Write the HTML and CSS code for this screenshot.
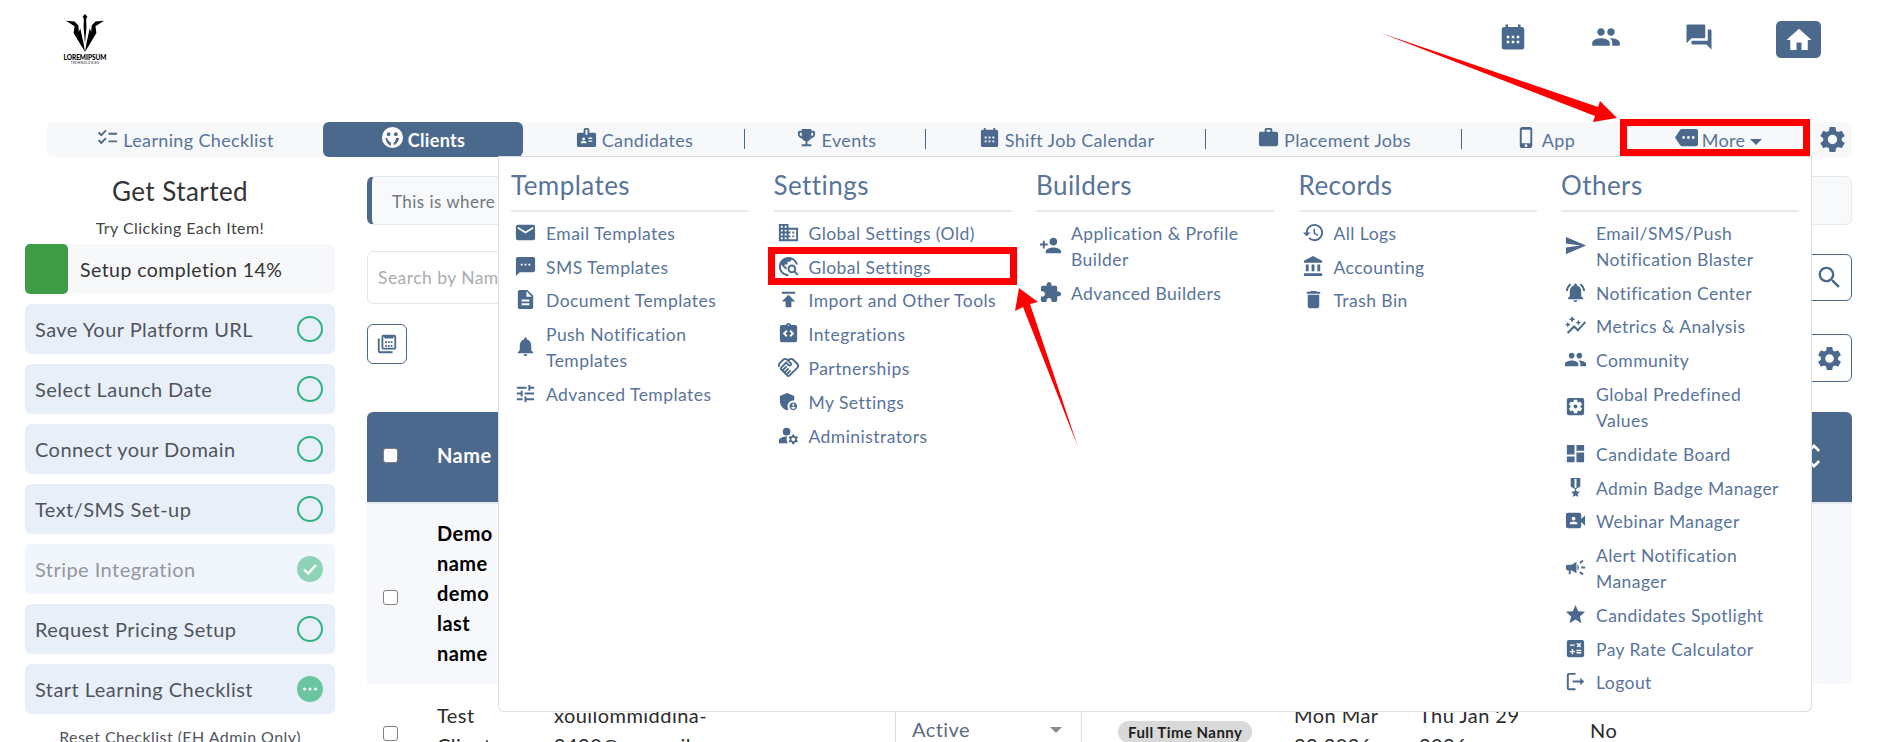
FILE: index.html
```html
<!DOCTYPE html>
<html lang="en">
<head>
<meta charset="utf-8">
<title>Clients</title>
<link rel="stylesheet" href="styles.css">
</head>
<body>
<svg class="defs" aria-hidden="true">
  <symbol id="i-checklist" viewBox="0 0 24 24"><path d="M22 7h-9v2h9V7zm0 8h-9v2h9v-2zM5.54 11 2 7.46l1.41-1.41 2.12 2.12 4.24-4.24 1.41 1.41L5.54 11zm0 8L2 15.46l1.41-1.41 2.12 2.12 4.24-4.24 1.41 1.41L5.54 19z"/></symbol>
  <symbol id="i-badge" viewBox="0 0 24 24"><path d="M20 7h-5V4c0-1.1-.9-2-2-2h-2c-1.1 0-2 .9-2 2v3H4c-1.1 0-2 .9-2 2v11c0 1.1.9 2 2 2h16c1.1 0 2-.9 2-2V9c0-1.1-.9-2-2-2zM9 12c.83 0 1.5.67 1.5 1.5S9.83 15 9 15s-1.5-.67-1.5-1.5S8.17 12 9 12zm3 6H6v-.75c0-1 2-1.5 3-1.5s3 .5 3 1.5V18zm1-9h-2V4h2v5zm5 7.5h-4V15h4v1.5zm0-3h-4V12h4v1.5z"/></symbol>
  <symbol id="i-trophy" viewBox="0 0 24 24"><path d="M19 5h-2V3H7v2H5c-1.1 0-2 .9-2 2v1c0 2.55 1.92 4.63 4.39 4.94.63 1.5 1.98 2.63 3.61 2.96V19H7v2h10v-2h-4v-3.1c1.63-.33 2.98-1.46 3.61-2.96C19.08 12.63 21 10.55 21 8V7c0-1.1-.9-2-2-2zM5 8V7h2v3.82C5.84 10.4 5 9.3 5 8zm14 0c0 1.3-.84 2.4-2 2.82V7h2v1z"/></symbol>
  <symbol id="i-calendar" viewBox="0 0 24 24"><path fill-rule="evenodd" d="M19 4h-1V2h-2v2H8V2H6v2H5a2 2 0 0 0-2 2v14a2 2 0 0 0 2 2h14a2 2 0 0 0 2-2V6a2 2 0 0 0-2-2zM7 11h2v2H7zm4 0h2v2h-2zm4 0h2v2h-2zm-8 4h2v2H7zm4 0h2v2h-2zm4 0h2v2h-2z"/></symbol>
  <symbol id="i-work" viewBox="0 0 24 24"><path d="M20 6h-4V4c0-1.11-.89-2-2-2h-4c-1.11 0-2 .89-2 2v2H4c-1.11 0-1.99.89-1.99 2L2 19c0 1.11.89 2 2 2h16c1.11 0 2-.89 2-2V8c0-1.11-.89-2-2-2zm-6 0h-4V4h4v2z"/></symbol>
  <symbol id="i-phone" viewBox="0 0 24 24"><path d="M15.5 1h-8C6.12 1 5 2.12 5 3.5v17C5 21.88 6.12 23 7.5 23h8c1.38 0 2.5-1.12 2.5-2.5v-17C18 2.12 16.88 1 15.5 1zm-4 21c-.83 0-1.5-.67-1.5-1.5s.67-1.5 1.5-1.5 1.5.67 1.5 1.5-.67 1.5-1.5 1.5zm4.5-4H7V4h9v14z"/></symbol>
  <symbol id="i-more" viewBox="0 0 24 24"><path d="M22 3H7c-.69 0-1.23.35-1.59.88L0 12l5.41 8.11c.36.53.9.89 1.59.89h15c1.1 0 2-.9 2-2V5c0-1.1-.9-2-2-2zM9 13.5c-.83 0-1.5-.67-1.5-1.5s.67-1.5 1.5-1.5 1.5.67 1.5 1.5-.67 1.5-1.5 1.5zm5 0c-.83 0-1.5-.67-1.5-1.5s.67-1.5 1.5-1.5 1.5.67 1.5 1.5-.67 1.5-1.5 1.5zm5 0c-.83 0-1.5-.67-1.5-1.5s.67-1.5 1.5-1.5 1.5.67 1.5 1.5-.67 1.5-1.5 1.5z"/></symbol>
  <symbol id="i-gear" viewBox="0 0 24 24"><path d="M19.14 12.94c.04-.3.06-.61.06-.94 0-.32-.02-.64-.07-.94l2.03-1.58c.18-.14.23-.41.12-.61l-1.92-3.32c-.12-.22-.37-.29-.59-.22l-2.39.96c-.5-.38-1.03-.7-1.62-.94l-.36-2.54c-.04-.24-.24-.41-.48-.41h-3.84c-.24 0-.43.17-.47.41l-.36 2.54c-.59.24-1.13.57-1.62.94l-2.39-.96c-.22-.08-.47 0-.59.22L2.74 8.87c-.12.21-.08.47.12.61l2.03 1.58c-.05.3-.09.63-.09.94s.02.64.07.94l-2.03 1.58c-.18.14-.23.41-.12.61l1.92 3.32c.12.22.37.29.59.22l2.39-.96c.5.38 1.03.7 1.62.94l.36 2.54c.05.24.24.41.48.41h3.84c.24 0 .44-.17.47-.41l.36-2.54c.59-.24 1.13-.56 1.62-.94l2.39.96c.22.08.47 0 .59-.22l1.92-3.32c.12-.22.07-.47-.12-.61l-2.01-1.58zM12 15.6c-1.98 0-3.6-1.62-3.6-3.6s1.62-3.6 3.6-3.6 3.6 1.62 3.6 3.6-1.62 3.6-3.6 3.6z"/></symbol>
  <symbol id="i-people" viewBox="0 0 24 24"><path d="M16 11c1.66 0 2.99-1.34 2.99-3S17.66 5 16 5c-1.66 0-3 1.34-3 3s1.34 3 3 3zm-8 0c1.66 0 2.99-1.34 2.99-3S9.66 5 8 5C6.34 5 5 6.34 5 8s1.34 3 3 3zm0 2c-2.33 0-7 1.17-7 3.5V19h14v-2.5c0-2.33-4.67-3.5-7-3.5zm8 0c-.29 0-.62.02-.97.05 1.16.84 1.97 1.97 1.97 3.45V19h6v-2.5c0-2.33-4.67-3.5-7-3.5z"/></symbol>
  <symbol id="i-forum" viewBox="0 0 24 24"><path d="M21 6h-2v9H6v2c0 .55.45 1 1 1h11l4 4V7c0-.55-.45-1-1-1zm-4 6V3c0-.55-.45-1-1-1H3c-.55 0-1 .45-1 1v14l4-4h10c.55 0 1-.45 1-1z"/></symbol>
  <symbol id="i-home" viewBox="0 0 24 24"><path d="M10 20v-6h4v6h5v-8h3L12 3 2 12h3v8z"/></symbol>
  <symbol id="i-email" viewBox="0 0 24 24"><path d="M20 4H4c-1.1 0-1.99.9-1.99 2L2 18c0 1.1.9 2 2 2h16c1.1 0 2-.9 2-2V6c0-1.1-.9-2-2-2zm0 4l-8 5-8-5V6l8 5 8-5v2z"/></symbol>
  <symbol id="i-sms" viewBox="0 0 24 24"><path d="M20 2H4c-1.1 0-1.99.9-1.99 2L2 22l4-4h14c1.1 0 2-.9 2-2V4c0-1.1-.9-2-2-2zM9 11H7V9h2v2zm4 0h-2V9h2v2zm4 0h-2V9h2v2z"/></symbol>
  <symbol id="i-doc" viewBox="0 0 24 24"><path d="M14 2H6c-1.1 0-1.99.9-1.99 2L4 20c0 1.1.89 2 1.99 2H18c1.1 0 2-.9 2-2V8l-6-6zm2 16H8v-2h8v2zm0-4H8v-2h8v2zm-3-5V3.5L18.5 9H13z"/></symbol>
  <symbol id="i-bell" viewBox="0 0 24 24"><path d="M12 22c1.1 0 2-.9 2-2h-4c0 1.1.9 2 2 2zm6-6v-5c0-3.07-1.63-5.64-4.5-6.32V4c0-.83-.67-1.5-1.5-1.5s-1.5.67-1.5 1.5v.68C7.64 5.36 6 7.92 6 11v5l-2 2v1h16v-1l-2-2z"/></symbol>
  <symbol id="i-tune" viewBox="0 0 24 24"><path d="M3 17v2h6v-2H3zM3 5v2h10V5H3zm10 16v-2h8v-2h-8v-2h-2v6h2zM7 9v2H3v2h4v2h2V9H7zm14 4v-2H11v2h10zm-6-4h2V7h4V5h-4V3h-2v6z"/></symbol>
  <symbol id="i-domain" viewBox="0 0 24 24"><path d="M12 7V3H2v18h20V7H12zM6 19H4v-2h2v2zm0-4H4v-2h2v2zm0-4H4V9h2v2zm0-4H4V5h2v2zm4 12H8v-2h2v2zm0-4H8v-2h2v2zm0-4H8V9h2v2zm0-4H8V5h2v2zm10 12h-8v-2h2v-2h-2v-2h2v-2h-2V9h8v10zm-2-8h-2v2h2v-2zm0 4h-2v2h2v-2z"/></symbol>
  <symbol id="i-travel" viewBox="0 0 24 24"><path d="M19.3 16.9c.4-.7.7-1.5.7-2.4 0-2.5-2-4.5-4.5-4.5S11 12 11 14.5s2 4.5 4.5 4.5c.9 0 1.7-.3 2.4-.7l3.2 3.2 1.4-1.4-3.2-3.2zm-3.8.1c-1.4 0-2.5-1.1-2.5-2.5s1.1-2.5 2.5-2.5 2.5 1.1 2.5 2.5-1.1 2.5-2.5 2.5zM12 20v2C6.48 22 2 17.52 2 12S6.48 2 12 2c4.84 0 8.87 3.44 9.8 8h-2.07c-.64-2.46-2.4-4.47-4.73-5.41V5c0 1.1-.9 2-2 2h-2v2c0 .55-.45 1-1 1H8v2h2v3H9l-4.79-4.79C4.08 10.79 4 11.38 4 12c0 4.41 3.59 8 8 8z"/></symbol>
  <symbol id="i-publish" viewBox="0 0 24 24"><path d="M5 4v2h14V4H5zm0 10h4v6h6v-6h4l-7-7-7 7z"/></symbol>
  <symbol id="i-code" viewBox="0 0 24 24"><path d="M19 3h-4.18C14.4 1.84 13.3 1 12 1s-2.4.84-2.82 2H5a2 2 0 0 0-2 2v14a2 2 0 0 0 2 2h14a2 2 0 0 0 2-2V5a2 2 0 0 0-2-2zM11 14.17l-1.41 1.42L6 12l3.59-3.59L11 9.83 8.83 12 11 14.17zm1-9.92c-.41 0-.75-.34-.75-.75s.34-.75.75-.75.75.34.75.75-.34.75-.75.75zm2.41 11.34L13 14.17 15.17 12 13 9.83l1.41-1.42L18 12l-3.59 3.59z"/></symbol>
  <symbol id="i-hand" viewBox="0 0 24 24"><path d="M12.22 19.85c-.18.18-.5.21-.71 0-.18-.18-.21-.5 0-.71l3.39-3.39-1.41-1.41-3.39 3.39c-.19.2-.51.19-.71 0-.21-.21-.18-.53 0-.71l3.39-3.39-1.41-1.41-3.39 3.39c-.18.18-.5.21-.71 0-.19-.19-.19-.51 0-.71l3.39-3.39-1.42-1.41-3.39 3.39c-.18.18-.5.21-.71 0-.19-.2-.19-.51 0-.71L9.52 8.4l1.87 1.86c.95.95 2.59.94 3.54 0 .98-.98.98-2.56 0-3.54l-1.86-1.86.28-.28c.78-.78 2.05-.78 2.83 0l4.24 4.24c.78.78.78 2.05 0 2.83l-8.2 8.2zm9.61-6.78c1.56-1.56 1.56-4.09 0-5.66l-4.24-4.24c-1.56-1.56-4.09-1.56-5.66 0l-.28.28-.28-.28c-1.56-1.56-4.09-1.56-5.66 0L2.17 6.71c-1.42 1.42-1.55 3.63-.4 5.19l1.45-1.45c-.39-.75-.26-1.7.37-2.33l3.54-3.54c.78-.78 2.05-.78 2.83 0l3.56 3.56c.18.18.21.5 0 .71-.21.21-.53.18-.71 0L9.52 5.57l-5.8 5.79c-.98.97-.98 2.56 0 3.54.39.39.89.63 1.42.7.07.52.3 1.02.7 1.42.4.4.9.63 1.42.7.07.52.3 1.02.7 1.42.4.4.9.63 1.42.7.07.54.31 1.03.7 1.42.47.47 1.1.73 1.77.73.67 0 1.3-.26 1.77-.73l8.21-8.19z"/></symbol>
  <symbol id="i-shield" viewBox="0 0 24 24"><path d="M17 11c.34 0 .67.04 1 .09V6.27L10.5 3 3 6.27v4.91c0 4.54 3.2 8.79 7.5 9.82.55-.13 1.08-.32 1.6-.55-.69-.98-1.1-2.17-1.1-3.45 0-3.31 2.69-6 6-6z"/><path d="M17 13c-2.21 0-4 1.79-4 4s1.79 4 4 4 4-1.79 4-4-1.79-4-4-4zm0 1.38c.62 0 1.12.51 1.12 1.12s-.51 1.12-1.12 1.12-1.12-.51-1.12-1.12.5-1.12 1.12-1.12zm0 5.37c-.93 0-1.74-.46-2.24-1.17.05-.72 1.51-1.08 2.24-1.08s2.19.36 2.24 1.08c-.5.71-1.31 1.17-2.24 1.17z"/></symbol>
  <symbol id="i-admin" viewBox="0 0 24 24"><circle cx="10" cy="8" r="4"/><path d="M10.67 13.02c-.22-.01-.44-.02-.67-.02-2.42 0-4.68.67-6.61 1.82-.88.52-1.39 1.5-1.39 2.53V20h9.26c-.79-1.13-1.26-2.51-1.26-4 0-1.07.25-2.07.67-2.98z"/><path d="M20.75 16c0-.22-.03-.42-.06-.63l1.14-1.01-1-1.73-1.45.49c-.32-.27-.68-.48-1.08-.63L18 11h-2l-.3 1.49c-.4.15-.76.36-1.08.63l-1.45-.49-1 1.73 1.14 1.01c-.03.21-.06.41-.06.63s.03.42.06.63l-1.14 1.01 1 1.73 1.45-.49c.32.27.68.48 1.08.63L16 21h2l.3-1.49c.4-.15.76-.36 1.08-.63l1.45.49 1-1.73-1.14-1.01c.03-.21.06-.41.06-.63zM17 18c-1.1 0-2-.9-2-2s.9-2 2-2 2 .9 2 2-.9 2-2 2z"/></symbol>
  <symbol id="i-personadd" viewBox="0 0 24 24"><path d="M15 12c2.21 0 4-1.79 4-4s-1.79-4-4-4-4 1.79-4 4 1.79 4 4 4zm-9-2V7H4v3H1v2h3v3h2v-3h3v-2H6zm9 4c-2.67 0-8 1.34-8 4v2h16v-2c0-2.66-5.33-4-8-4z"/></symbol>
  <symbol id="i-puzzle" viewBox="0 0 24 24"><path d="M20.5 11H19V7c0-1.1-.9-2-2-2h-4V3.5C13 2.12 11.88 1 10.5 1S8 2.12 8 3.5V5H4c-1.1 0-1.99.9-1.99 2v3.8H3.5c1.49 0 2.7 1.21 2.7 2.7s-1.21 2.7-2.7 2.7H2V20c0 1.1.9 2 2 2h3.8v-1.5c0-1.49 1.21-2.7 2.7-2.7 1.49 0 2.7 1.21 2.7 2.7V22H17c1.1 0 2-.9 2-2v-4h1.5c1.38 0 2.5-1.12 2.5-2.5S21.88 11 20.5 11z"/></symbol>
  <symbol id="i-history" viewBox="0 0 24 24"><path d="M13 3c-4.97 0-9 4.03-9 9H1l3.89 3.89.07.14L9 12H6c0-3.87 3.13-7 7-7s7 3.13 7 7-3.13 7-7 7c-1.93 0-3.68-.79-4.94-2.06l-1.42 1.42C8.27 19.99 10.51 21 13 21c4.97 0 9-4.03 9-9s-4.03-9-9-9zm-1 5v5l4.28 2.54.72-1.21-3.5-2.08V8H12z"/></symbol>
  <symbol id="i-bank" viewBox="0 0 24 24"><path d="M4 10v7h3v-7H4zm6 0v7h3v-7h-3zM2 22h19v-3H2v3zm14-12v7h3v-7h-3zm-4.5-9L2 6v2h19V6l-9.5-5z"/></symbol>
  <symbol id="i-delete" viewBox="0 0 24 24"><path d="M6 19c0 1.1.9 2 2 2h8c1.1 0 2-.9 2-2V7H6v12zM19 4h-3.5l-1-1h-5l-1 1H5v2h14V4z"/></symbol>
  <symbol id="i-send" viewBox="0 0 24 24"><path d="M2.01 21L23 12 2.01 3 2 10l15 2-15 2z"/></symbol>
  <symbol id="i-bellactive" viewBox="0 0 24 24"><path d="M7.58 4.08L6.15 2.65C3.75 4.48 2.17 7.3 2.03 10.5h2c.15-2.65 1.51-4.97 3.55-6.42zm12.39 6.42h2c-.15-3.2-1.73-6.02-4.12-7.85l-1.42 1.43c2.02 1.45 3.39 3.77 3.54 6.42zM18 11c0-3.07-1.64-5.64-4.5-6.32V4c0-.83-.67-1.5-1.5-1.5s-1.5.67-1.5 1.5v.68C7.63 5.36 6 7.92 6 11v5l-2 2v1h16v-1l-2-2v-5zm-6 11c.14 0 .27-.01.4-.04.65-.14 1.18-.58 1.44-1.18.1-.24.15-.5.15-.78h-4c.01 1.1.9 2 2.01 2z"/></symbol>
  <symbol id="i-graph" viewBox="0 0 24 24"><path d="M14.06 9.94 12 9l2.06-.94L15 6l.94 2.06L18 9l-2.06.94L15 12l-.94-2.06zM4 14l.94-2.06L7 11l-2.06-.94L4 8l-.94 2.06L1 11l2.06.94L4 14zm4.5-5 1.09-2.41L12 5.5l-2.41-1.09L8.5 2 7.41 4.41 5 5.5l2.41 1.09L8.5 9zm-4 11.5 6-6.01 4 4L23 8.93l-1.41-1.41-7.09 7.97-4-4L3 19l1.5 1.5z"/></symbol>
  <symbol id="i-apps" viewBox="0 0 24 24"><path d="M12 10c-1.1 0-2 .9-2 2s.9 2 2 2 2-.9 2-2-.9-2-2-2zm7-7H5c-1.11 0-2 .9-2 2v14c0 1.1.89 2 2 2h14c1.11 0 2-.9 2-2V5c0-1.1-.89-2-2-2zm-1.75 9c0 .23-.02.46-.05.68l1.48 1.16c.13.11.17.3.08.45l-1.4 2.42c-.09.15-.27.21-.43.15l-1.74-.7c-.36.28-.76.51-1.18.69l-.26 1.85c-.03.17-.18.3-.35.3h-2.8c-.17 0-.32-.13-.35-.29l-.26-1.85c-.43-.18-.82-.41-1.18-.69l-1.74.7c-.16.06-.34 0-.43-.15l-1.4-2.42c-.09-.15-.05-.34.08-.45l1.48-1.16c-.03-.23-.05-.46-.05-.69 0-.23.02-.46.05-.68l-1.48-1.16c-.13-.11-.17-.3-.08-.45l1.4-2.42c.09-.15.27-.21.43-.15l1.74.7c.36-.28.76-.51 1.18-.69l.26-1.85c.03-.17.18-.3.35-.3h2.8c.17 0 .32.13.35.29l.26 1.85c.43.18.82.41 1.18.69l1.74-.7c.16-.06.34 0 .43.15l1.4 2.42c.09.15.05.34-.08.45l-1.48 1.16c.03.23.05.46.05.69z"/></symbol>
  <symbol id="i-dash" viewBox="0 0 24 24"><path d="M3 13h8V3H3v10zm0 8h8v-6H3v6zm10 0h8V11h-8v10zm0-18v6h8V3h-8z"/></symbol>
  <symbol id="i-medal" viewBox="0 0 24 24"><path d="M17 10.43V2H7v8.43c0 .35.18.68.49.86l4.18 2.51-.99 2.34-3.41.29 2.59 2.24L9.07 22 12 20.23 14.93 22l-.78-3.33 2.59-2.24-3.41-.29-.99-2.34 4.18-2.51c.3-.18.48-.5.48-.86zm-4 1.8-1 .6-1-.6V3h2v9.23z"/></symbol>
  <symbol id="i-video" viewBox="0 0 24 24"><path d="M18 10.48V6c0-1.1-.9-2-2-2H4c-1.1 0-2 .9-2 2v12c0 1.1.9 2 2 2h12c1.1 0 2-.9 2-2v-4.48l4 3.98v-11l-4 3.98zM10 8c1.1 0 2 .9 2 2s-.9 2-2 2-2-.9-2-2 .9-2 2-2zm4 8H6v-.57c0-.81.48-1.53 1.22-1.85.85-.37 1.79-.58 2.78-.58.99 0 1.93.21 2.78.58.74.32 1.22 1.04 1.22 1.85V16z"/></symbol>
  <symbol id="i-campaign" viewBox="0 0 24 24"><path d="M18 11v2h4v-2h-4zm-2 6.61c.96.71 2.21 1.65 3.2 2.39.4-.53.8-1.07 1.2-1.6-.99-.74-2.24-1.68-3.2-2.4-.4.54-.8 1.08-1.2 1.61zM20.4 5.6c-.4-.53-.8-1.07-1.2-1.6-.99.74-2.24 1.68-3.2 2.4.4.53.8 1.07 1.2 1.6.96-.72 2.21-1.65 3.2-2.4zM4 9c-1.1 0-2 .9-2 2v2c0 1.1.9 2 2 2h1v4h2v-4h1l5 3V6L8 9H4zm11.5 3c0-1.33-.58-2.53-1.5-3.35v6.69c.92-.81 1.5-2.01 1.5-3.34z"/></symbol>
  <symbol id="i-star" viewBox="0 0 24 24"><path d="M12 17.27L18.18 21l-1.64-7.03L22 9.24l-7.19-.61L12 2 9.19 8.63 2 9.24l5.46 4.73L5.82 21z"/></symbol>
  <symbol id="i-calc" viewBox="0 0 24 24"><path d="M19 3H5c-1.1 0-2 .9-2 2v14c0 1.1.9 2 2 2h14c1.1 0 2-.9 2-2V5c0-1.1-.9-2-2-2zm-5.97 4.06L14.09 6l1.41 1.41L16.91 6l1.06 1.06-1.41 1.41 1.41 1.41-1.06 1.06-1.41-1.4-1.41 1.41-1.06-1.06 1.41-1.41-1.41-1.42zm-6.78.66h5v1.5h-5v-1.5zM11.5 16h-2v2H8v-2H6v-1.5h2v-2h1.5v2h2V16zm6.5 1.25h-5v-1.5h5v1.5zm0-2.5h-5v-1.5h5v1.5z"/></symbol>
  <symbol id="i-logout" viewBox="0 0 24 24"><path d="M5 5h7V3H5c-1.1 0-2 .9-2 2v14c0 1.1.9 2 2 2h7v-2H5V5zm16 7l-4-4v3H9v2h8v3l4-4z"/></symbol>
  <symbol id="i-search" viewBox="0 0 24 24"><path d="M15.5 14h-.79l-.28-.27C15.41 12.59 16 11.11 16 9.5 16 5.91 13.09 3 9.5 3S3 5.91 3 9.5 5.91 16 9.5 16c1.61 0 3.09-.59 4.23-1.57l.27.28v.79l5 4.99L20.49 19l-4.99-5zm-6 0C7.01 14 5 11.99 5 9.5S7.01 5 9.5 5 14 7.01 14 9.5 11.99 14 9.5 14z"/></symbol>
  <symbol id="i-unfold" viewBox="0 0 24 24"><path d="M12 5.83L15.17 9l1.41-1.41L12 3 7.41 7.59 8.83 9 12 5.83zm0 12.34L8.83 15l-1.41 1.41L12 21l4.59-4.59L15.17 15 12 18.17z"/></symbol>
  <symbol id="i-stack" viewBox="0 0 24 24"><path d="M4 6H2v14a2 2 0 0 0 2 2h14v-2H4z"/><path d="M20 2H8a2 2 0 0 0-2 2v12a2 2 0 0 0 2 2h12a2 2 0 0 0 2-2V4a2 2 0 0 0-2-2zm0 14H8V4h1v2h10V4h1zM10 9h2v2h-2zm3 0h2v2h-2zm3 0h2v2h-2zm-6 4h2v2h-2zm3 0h2v2h-2zm3 0h2v2h-2z"/></symbol>
  <symbol id="i-face" viewBox="0 0 24 24"><path fill-rule="evenodd" d="M12 1a11 11 0 1 0 0 22 11 11 0 0 0 0-22zM8 6.500a2 2 0 1 1 0 4 2 2 0 0 1 0-4zm7.500 0a2 2 0 1 1 0 4 2 2 0 0 1 0-4zM4.500 12.500h1.800c1 2.600 2.400 4.200 4.200 5v3.200c-3-.8-5.200-4-6-8.200zm11.200 0H19c-.5 3.200-2.500 6-5.500 7.500-.3-.8-.4-1.500-.4-2.300 1.300-.9 2.100-2.600 2.600-5.200z"/></symbol>
</svg>

<header class="top">
  <div class="logo">
    <svg class="logo-mark" viewBox="0 0 40 40" aria-hidden="true">
      <path d="M20 0l2.500 3-1.300 2 .3 9L20 31l-1.500-17 .3-9-1.300-2z"/>
      <path d="M0 7l9 1 4 4 .5 7 1.500-4 3.500 16L20 40 8 20l1-7z"/>
      <path d="M40 7l-9 1-4 4-.5 7-1.500-4-3.500 16L20 40l12-20-1-7z"/>
    </svg>
    <div class="logo-name">LOREMIPSUM</div>
    <div class="logo-sub">TECHNOLOGIES</div>
  </div>
  <div class="top-icons">
    <svg class="ti"><use href="#i-calendar"/></svg>
    <svg class="ti"><use href="#i-people"/></svg>
    <svg class="ti"><use href="#i-forum"/></svg>
    <div class="home"><svg class="ti-home"><use href="#i-home"/></svg></div>
  </div>
</header>

<nav class="tabs">
  <a class="tab t-learn"><svg class="nav-i"><use href="#i-checklist"/></svg>Learning Checklist</a>
  <a class="tab t-clients active"><svg class="nav-i"><use href="#i-face"/></svg>Clients</a>
  <a class="tab t-cand sep"><svg class="nav-i"><use href="#i-badge"/></svg>Candidates</a>
  <a class="tab t-events sep"><svg class="nav-i"><use href="#i-trophy"/></svg>Events</a>
  <a class="tab t-shift sep"><svg class="nav-i"><use href="#i-calendar"/></svg>Shift Job Calendar</a>
  <a class="tab t-place sep"><svg class="nav-i"><use href="#i-work"/></svg>Placement Jobs</a>
  <a class="tab t-app"><svg class="nav-i"><use href="#i-phone"/></svg>App</a>
  <a class="tab t-more"><svg class="nav-i"><use href="#i-more"/></svg>More<span class="caret"></span></a>
  <a class="tab t-gear"><svg class="gear-i"><use href="#i-gear"/></svg></a>
</nav>

<div class="layout">
  <aside class="side">
    <h2 class="side-title">Get Started</h2>
    <p class="side-sub">Try Clicking Each Item!</p>
    <div class="progress"><div class="progress-fill"></div><span>Setup completion 14%</span></div>
    <div class="step"><span>Save Your Platform URL</span><i class="ring"></i></div>
    <div class="step"><span>Select Launch Date</span><i class="ring"></i></div>
    <div class="step"><span>Connect your Domain</span><i class="ring"></i></div>
    <div class="step"><span>Text/SMS Set-up</span><i class="ring"></i></div>
    <div class="step done"><span>Stripe Integration</span>
      <svg class="state" viewBox="0 0 26 26"><circle cx="13" cy="13" r="13" fill="#8ed3b5"/><path d="M7 13.500l4.200 4L19 9" fill="none" stroke="#fff" stroke-width="2.400"/></svg>
    </div>
    <div class="step"><span>Request Pricing Setup</span><i class="ring"></i></div>
    <div class="step"><span>Start Learning Checklist</span>
      <svg class="state" viewBox="0 0 26 26"><circle cx="13" cy="13" r="13" fill="#6cc5a1"/><circle cx="7.500" cy="13" r="1.500" fill="#fff"/><circle cx="13" cy="13" r="1.500" fill="#fff"/><circle cx="18.500" cy="13" r="1.500" fill="#fff"/></svg>
    </div>
    <p class="reset">Reset Checklist (EH Admin Only)</p>
  </aside>

  <main class="content">
    <div class="alert">This is where</div>
    <div class="search-row">
      <input class="search" type="text" placeholder="Search by Name, Email or Phone">
      <button class="icon-btn search-btn"><svg class="btn-i"><use href="#i-search"/></svg></button>
    </div>
    <div class="tools">
      <button class="icon-btn calc-btn"><svg class="btn-s"><use href="#i-stack"/></svg></button>
      <button class="icon-btn cfg-btn"><svg class="btn-i"><use href="#i-gear"/></svg></button>
    </div>
    <table class="grid">
      <colgroup>
        <col class="c-check"><col class="c-name"><col class="c-email"><col class="c-status"><col class="c-type"><col class="c-d1"><col class="c-d2"><col class="c-last">
      </colgroup>
      <thead>
        <tr>
          <th class="cell-check"><input class="cb cb-head" type="checkbox"></th>
          <th>Name</th><th></th><th></th><th></th><th></th><th></th>
          <th class="th-last"><svg class="sort"><use href="#i-unfold"/></svg></th>
        </tr>
      </thead>
      <tbody>
        <tr class="row-a">
          <td class="cell-check"><input class="cb" type="checkbox"></td>
          <td class="strong cell-name">Demo name demo last name</td>
          <td colspan="6"></td>
        </tr>
        <tr class="row-b">
          <td class="cell-check"><input class="cb" type="checkbox"></td>
          <td class="cell-name">Test Client</td>
          <td class="cell-email">xouilommiddina-9420@yopmail.com</td>
          <td><div class="select">Active<span class="sel-caret"></span></div></td>
          <td class="cell-type"><span class="pill">Full Time Nanny</span></td>
          <td class="cell-d1">Mon Mar 23 2026</td>
          <td class="cell-d2">Thu Jan 29 2026</td>
          <td>No</td>
        </tr>
      </tbody>
    </table>
  </main>
</div>

<section class="menu">
  <div class="menu-col">
    <h3>Templates</h3>
    <a class="mi"><svg><use href="#i-email"/></svg><span>Email Templates</span></a>
    <a class="mi"><svg><use href="#i-sms"/></svg><span>SMS Templates</span></a>
    <a class="mi"><svg><use href="#i-doc"/></svg><span>Document Templates</span></a>
    <a class="mi"><svg><use href="#i-bell"/></svg><span>Push Notification Templates</span></a>
    <a class="mi"><svg><use href="#i-tune"/></svg><span>Advanced Templates</span></a>
  </div>
  <div class="menu-col">
    <h3>Settings</h3>
    <a class="mi"><svg><use href="#i-domain"/></svg><span>Global Settings (Old)</span></a>
    <a class="mi"><svg><use href="#i-travel"/></svg><span>Global Settings</span></a>
    <a class="mi"><svg><use href="#i-publish"/></svg><span>Import and Other Tools</span></a>
    <a class="mi"><svg><use href="#i-code"/></svg><span>Integrations</span></a>
    <a class="mi"><svg><use href="#i-hand"/></svg><span>Partnerships</span></a>
    <a class="mi"><svg><use href="#i-shield"/></svg><span>My Settings</span></a>
    <a class="mi"><svg><use href="#i-admin"/></svg><span>Administrators</span></a>
  </div>
  <div class="menu-col">
    <h3>Builders</h3>
    <a class="mi"><svg><use href="#i-personadd"/></svg><span>Application &amp; Profile Builder</span></a>
    <a class="mi"><svg><use href="#i-puzzle"/></svg><span>Advanced Builders</span></a>
  </div>
  <div class="menu-col">
    <h3>Records</h3>
    <a class="mi"><svg><use href="#i-history"/></svg><span>All Logs</span></a>
    <a class="mi"><svg><use href="#i-bank"/></svg><span>Accounting</span></a>
    <a class="mi"><svg><use href="#i-delete"/></svg><span>Trash Bin</span></a>
  </div>
  <div class="menu-col">
    <h3>Others</h3>
    <a class="mi"><svg><use href="#i-send"/></svg><span>Email/SMS/Push Notification Blaster</span></a>
    <a class="mi"><svg><use href="#i-bellactive"/></svg><span>Notification Center</span></a>
    <a class="mi"><svg><use href="#i-graph"/></svg><span>Metrics &amp; Analysis</span></a>
    <a class="mi"><svg><use href="#i-people"/></svg><span>Community</span></a>
    <a class="mi"><svg><use href="#i-apps"/></svg><span>Global Predefined Values</span></a>
    <a class="mi"><svg><use href="#i-dash"/></svg><span>Candidate Board</span></a>
    <a class="mi"><svg><use href="#i-medal"/></svg><span>Admin Badge Manager</span></a>
    <a class="mi"><svg><use href="#i-video"/></svg><span>Webinar Manager</span></a>
    <a class="mi"><svg><use href="#i-campaign"/></svg><span>Alert Notification Manager</span></a>
    <a class="mi"><svg><use href="#i-star"/></svg><span>Candidates Spotlight</span></a>
    <a class="mi"><svg><use href="#i-calc"/></svg><span>Pay Rate Calculator</span></a>
    <a class="mi"><svg><use href="#i-logout"/></svg><span>Logout</span></a>
  </div>
</section>

<svg class="marks" viewBox="0 0 1892 742" aria-hidden="true">
  <rect x="1623.500" y="122.500" width="183" height="30" fill="none" stroke="#ff0000" stroke-width="7"/>
  <rect x="771.500" y="250.500" width="242" height="31" fill="none" stroke="#ff0000" stroke-width="7"/>
  <polygon points="1381,33 1598,107 1600,101 1617,118 1593,122 1595,116" fill="#ff0000"/>
  <polygon points="1019,288 1038,302 1030,304 1078,447 1023,307 1015,311" fill="#ff0000"/>
</svg>
</body>
</html>
```

FILE: styles.css
```css
* { box-sizing: border-box; }
html, body { margin: 0; padding: 0; }
body {
  position: relative;
  width: 1892px;
  height: 742px;
  overflow: hidden;
  background: #fff;
  color: #333;
  font-family: "Lato", "Open Sans", sans-serif;
  font-size: 18px;
  letter-spacing: .45px;
}
.defs { display: none; }
svg { fill: currentColor; }

/* header */
.top { height: 122px; display: flex; justify-content: space-between; padding: 13px 71px 0 63px; color: #4b698c; }
.logo { width: 44px; display: flex; flex-direction: column; align-items: center; color: #000; }
.logo-mark { width: 38px; height: 40px; display: block; }
.logo-name { font-size: 6.500px; font-weight: 900; line-height: 8px; margin-top: 1px; letter-spacing: -.05px; white-space: nowrap; }
.logo-sub { font-size: 3px; line-height: 3px; letter-spacing: .5px; white-space: nowrap; }
.top-icons { display: flex; align-items: flex-start; padding-top: 9px; }
.ti { width: 30px; height: 30px; margin-right: 63px; }
.home { width: 45px; height: 37px; margin-top: -1px; margin-left: -1px; background: #4b698c; color: #fff; border-radius: 5px; display: flex; align-items: center; justify-content: center; }
.ti-home { width: 30px; height: 30px; }

/* tabs */
.tabs { display: flex; height: 35px; margin-left: 47px; width: 1805px; background: #f7f8fa; border-radius: 6px; color: #58749a; }
.tab { position: relative; display: flex; align-items: center; justify-content: center; flex: none; font-size: 18px; letter-spacing: .35px; white-space: nowrap; padding-top: 1px; }
.nav-i { width: 23px; height: 23px; margin: -6px 4px 0 0; color: #4b698c; }
.t-learn { width: 276px; }
.t-clients { width: 200px; }
.t-cand { width: 222px; }
.t-events { width: 181px; }
.t-shift { width: 280px; }
.t-place { width: 256px; }
.t-app { width: 166px; }
.t-more { width: 181px; }
.t-gear { width: 43px; padding: 0 0 0 4px; color: #4b698c; }
.active { background: #4b698c; color: #fff; font-weight: 700; border-radius: 6px; }
.active .nav-i { color: #fff; }
.sep::after { content: ""; position: absolute; right: 0; top: 7px; height: 20px; width: 1px; background: #4b698c; }
.caret { width: 0; height: 0; margin: 4px 0 0 5px; border-left: 6px solid transparent; border-right: 6px solid transparent; border-top: 6px solid #4b698c; }
.gear-i { width: 31px; height: 31px; }

/* layout */
.layout { display: flex; padding-left: 25px; }
.side { width: 310px; flex: none; padding-top: 16px; }
.side-title { margin: 0; text-align: center; font-size: 26px; line-height: 36px; font-weight: 400; color: #333; }
.side-sub { margin: 9px 0 6px; text-align: center; font-size: 16px; line-height: 20px; color: #444; }
.progress { position: relative; height: 50px; background: #f7f8fa; border-radius: 6px; display: flex; align-items: center; margin-bottom: 10px; font-size: 19.500px; color: #333; }
.progress-fill { width: 43px; height: 50px; background: #3f9c46; border-radius: 5px; margin-right: 12px; }
.step { height: 50px; margin-bottom: 10px; padding: 0 12px 0 10px; background: #e9eff9; border-radius: 6px; display: flex; align-items: center; justify-content: space-between; font-size: 20px; color: #50555c; }
.step.done { background: #f1f5fc; color: #94979c; }
.ring { width: 26px; height: 26px; border: 2.5px solid #2fb380; border-radius: 50%; }
.state { width: 26px; height: 26px; }
.reset { margin: 13px 0 0; text-align: center; font-size: 16px; line-height: 20px; color: #50555c; }

/* content */
.content { width: 1485px; margin-left: 32px; flex: none; padding-top: 19px; }
.alert { height: 49px; padding: 1px 0 0 20px; background: #f8f9fb; border: 1px solid #e6e8ec; border-left: 5px solid #4b698c; border-radius: 7px; display: flex; align-items: center; font-size: 17px; color: #71777f; white-space: nowrap; overflow: hidden; }
.search-row { display: flex; align-items: center; margin-top: 26px; height: 53px; gap: 8px; }
.search { flex: 1; height: 53px; padding: 0 10px; border: 1px solid #e4e6ea; border-radius: 6px; background: #fff; font: inherit; font-size: 17.500px; letter-spacing: .45px; }
.search::placeholder { color: #a9acb1; }
.icon-btn { display: flex; align-items: center; justify-content: center; padding: 0; background: #fff; border: 1px solid #4b698c; border-radius: 6px; color: #4b698c; }
.search-btn { width: 46px; height: 47px; }
.tools { display: flex; justify-content: space-between; align-items: flex-start; margin-top: 20px; height: 58px; margin-bottom: 30px; }
.calc-btn { width: 40px; height: 40px; }
.cfg-btn { width: 46px; height: 48px; margin-top: 10px; }
.btn-i { width: 29px; height: 29px; }
.btn-s { width: 22px; height: 22px; }

/* table */
.grid { width: 1485px; table-layout: fixed; border-collapse: separate; border-spacing: 0; font-size: 20px; line-height: 30px; color: #2b2b2b; }
.c-check { width: 70px; }
.c-name { width: 117px; }
.c-email { width: 342px; }
.c-status { width: 186px; }
.c-type { width: 212px; }
.c-d1 { width: 125px; }
.c-d2 { width: 171px; }
.c-last { width: 262px; }
.grid th { height: 92px; background: #4b698c; border-bottom: 2px solid #e3e7ee; color: #fff; font-weight: 700; text-align: left; padding: 0 0 4px; }
.grid th:first-child { border-top-left-radius: 6px; }
.grid th:last-child { border-top-right-radius: 6px; }
.grid td { padding: 0; }
.cell-check { padding-left: 16px !important; }
.th-last { text-align: right !important; padding-right: 22px !important; }
.sort { width: 32px; height: 32px; vertical-align: middle; }
.row-a td { background: #f7f8fb; height: 180px; }
.row-a .cell-name { padding-bottom: 2px; }
.strong { font-weight: 700; color: #000; }
.row-b td { height: 92px; }
.cell-name { padding-right: 42px !important; }
.cb { appearance: none; -webkit-appearance: none; display: block; width: 15px; height: 15px; margin: 6px 0 0; background: #fff; border: 1.500px solid #808080; border-radius: 3px; }
.cb-head { margin-top: 0; }
.cell-email { padding-right: 70px !important; }
.select { position: relative; height: 62px; margin-right: 0; margin-left: -1px; padding: 0 0 3px 16px; display: flex; align-items: center; border: 1px solid #ddd; color: #5c6b7d; }
.sel-caret { position: absolute; right: 19px; top: 27px; width: 0; height: 0; border-left: 6px solid transparent; border-right: 6px solid transparent; border-top: 6px solid #8a8a8a; }
.cell-type { padding-left: 36px !important; }
.pill { display: inline-block; height: 22px; padding: 0 10px; background: #d9d9d9; border-radius: 11px; font-size: 15px; line-height: 22px; font-weight: 700; color: #222; white-space: nowrap; }
.cell-d1 { padding-right: 30px !important; }
.cell-d2 { padding-right: 50px !important; }

/* mega menu */
.menu { position: absolute; left: 498px; top: 156px; width: 1314px; height: 556px; padding: 10px 12px 0 12px; display: grid; grid-template-columns: repeat(5, 238px); column-gap: 24.500px; align-content: start; background: #fff; border: 1px solid #dcdee2; border-top-color: #d8dadd; border-radius: 0 0 6px 6px; z-index: 5; color: #58749a; }
.menu-col h3 { margin: 0 0 5px; padding-bottom: 7px; font-size: 26px; line-height: 36px; font-weight: 400; border-bottom: 2px solid #e8e9ec; }
.mi { display: flex; align-items: center; padding: 3.900px 8px 3.900px 0; font-size: 17.500px; line-height: 26px; }
.mi svg { width: 23px; height: 23px; flex: none; margin: 0 9px 3px 3px; color: #4b698c; }

/* annotations */
.marks { position: absolute; left: 0; top: 0; width: 1892px; height: 742px; z-index: 10; pointer-events: none; }
```
